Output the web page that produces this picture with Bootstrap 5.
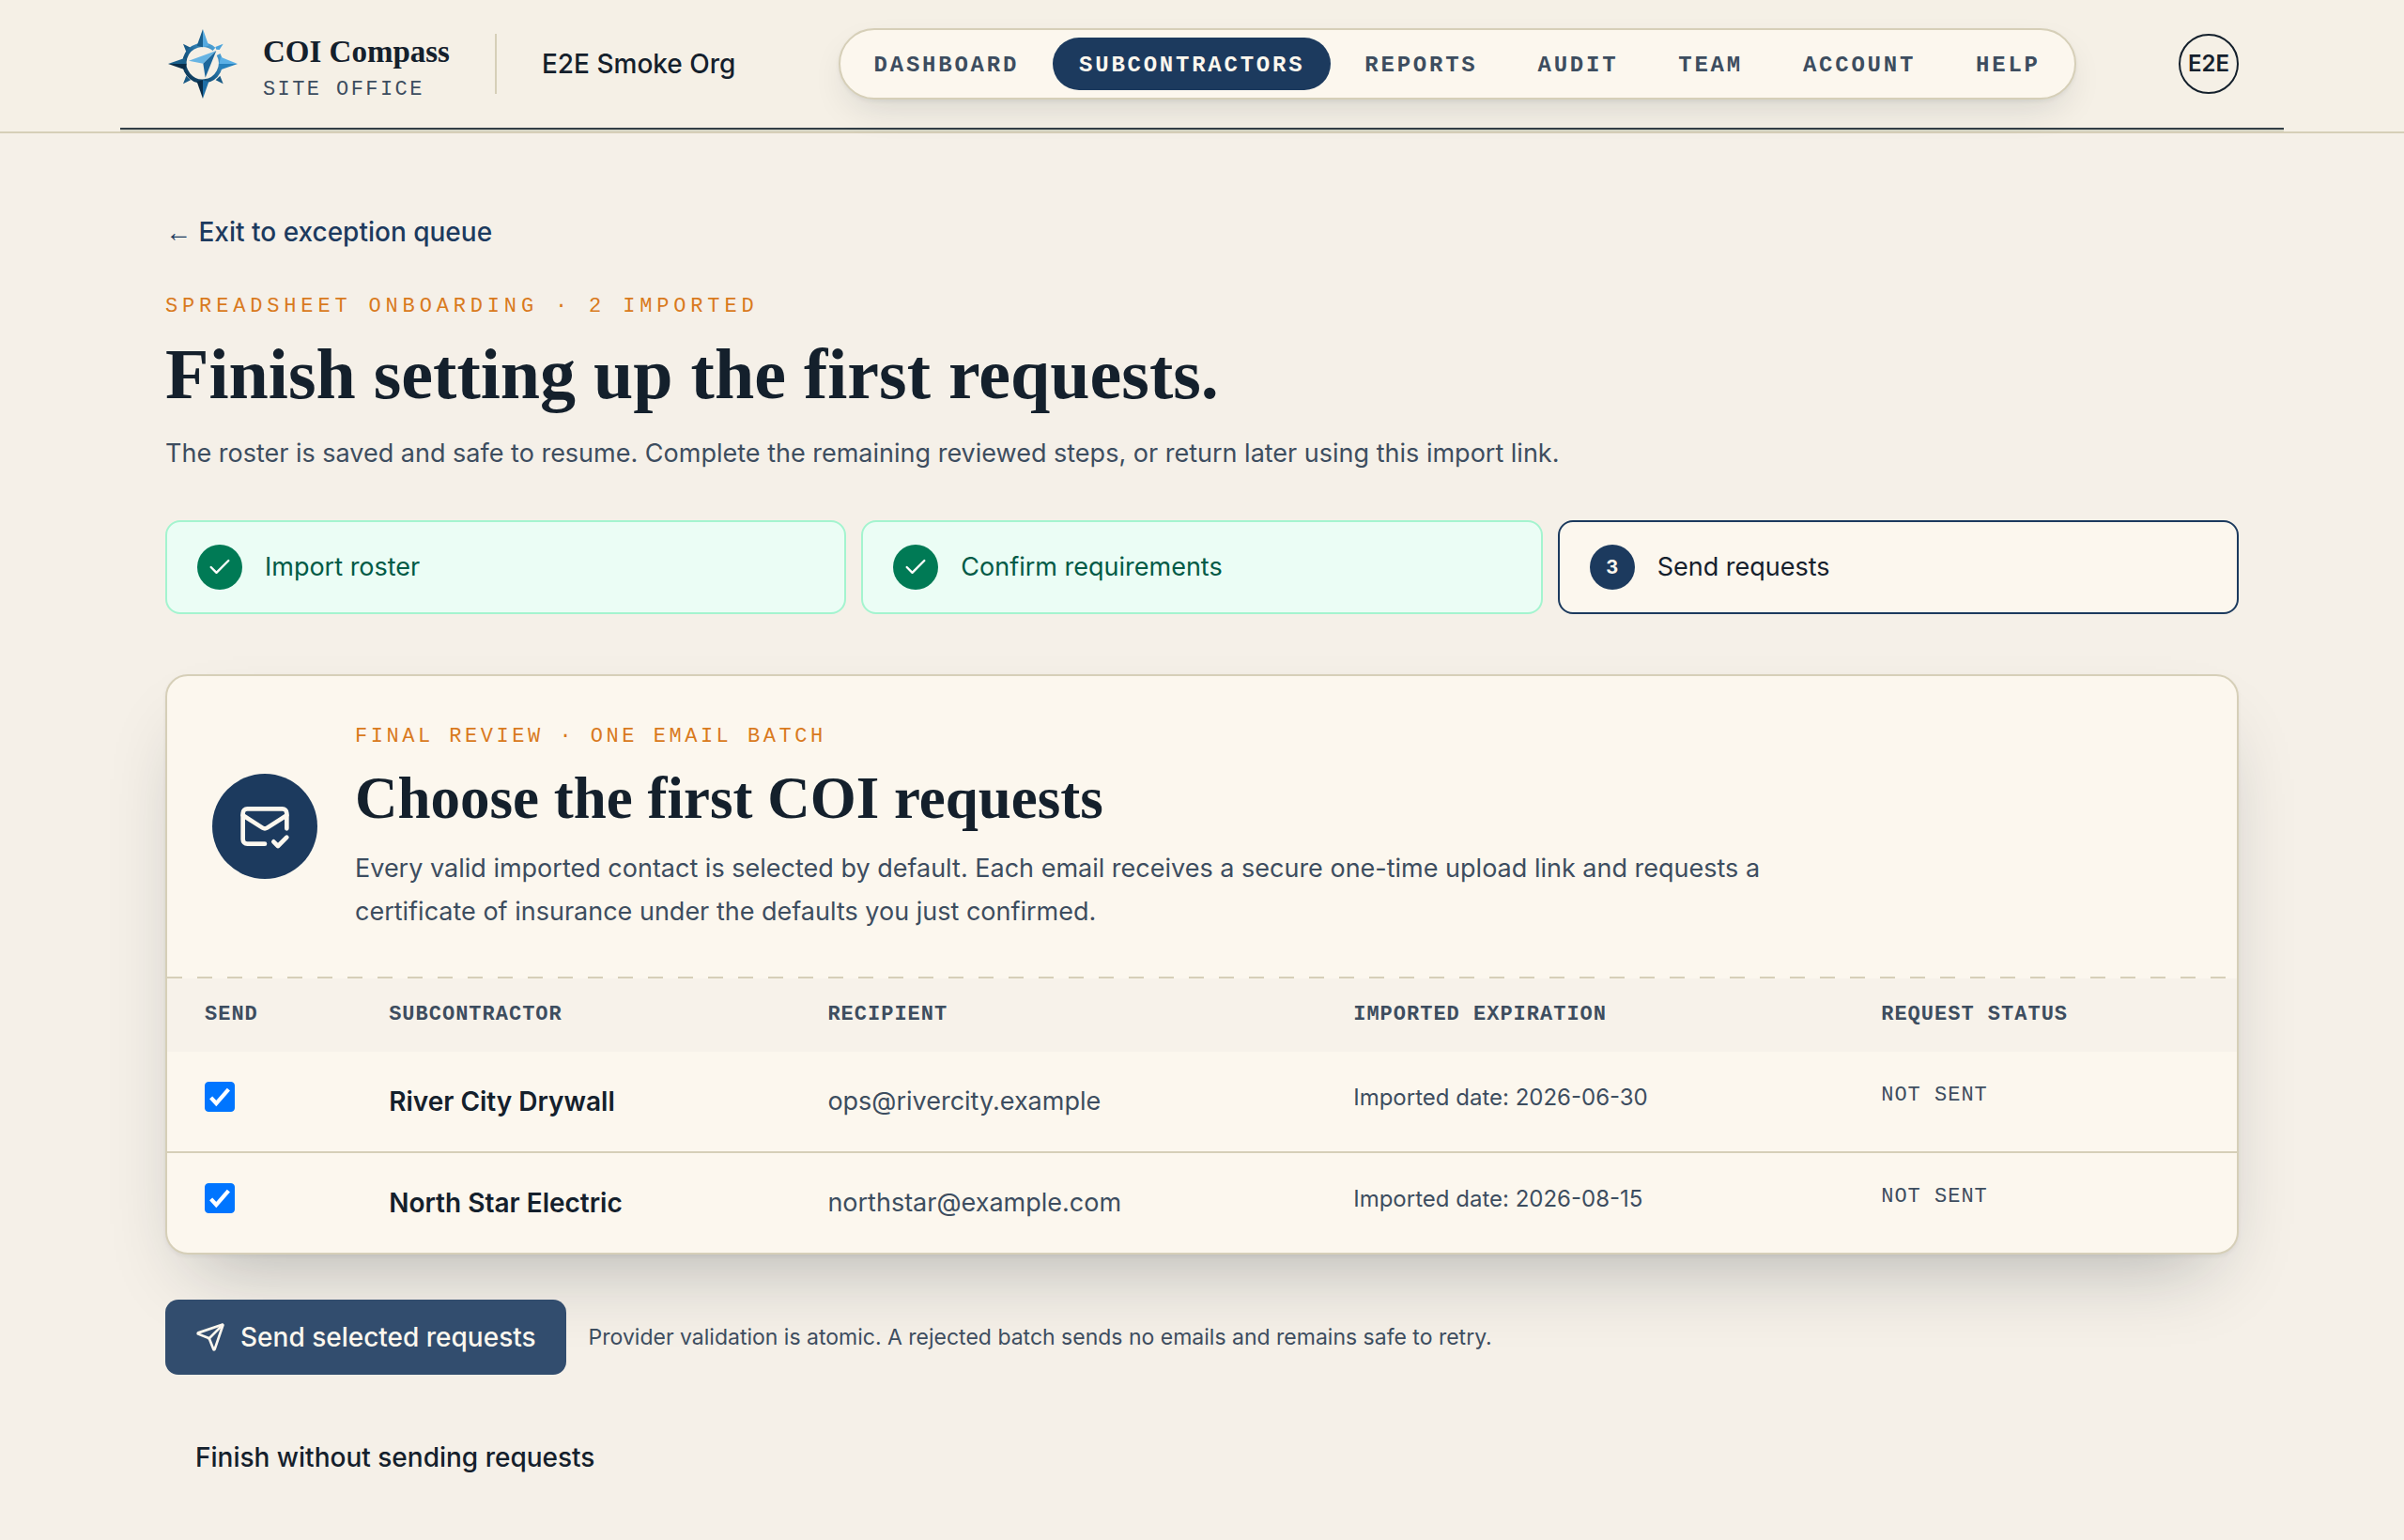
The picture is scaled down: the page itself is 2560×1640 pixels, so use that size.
<!DOCTYPE html>
<html lang="en">
<head>
<meta charset="utf-8">
<meta name="viewport" content="width=device-width, initial-scale=1">
<title>COI Compass – Send requests</title>
<link href="https://cdn.jsdelivr.net/npm/bootstrap@5.3.0/dist/css/bootstrap.min.css" rel="stylesheet">
<style>
  :root {
    --ink: #14202c;
    --slate: #3d4d5f;
    --navy: #1c3a5e;
    --paper: #f5f0e8;
    --cream: #fcf7ee;
    --line: #d6cfb8;
    --amber: #d97a1d;
    --mono: "Liberation Mono", monospace;
    --serif: "Liberation Serif", serif;
  }
  body {
    background: var(--paper);
    color: var(--ink);
    font-family: Inter, sans-serif;
    font-size: 28px;
    line-height: 42px;
  }
  .shell { max-width: 2304px; margin: 0 auto; padding: 0 48px; }

  .site-header { border-bottom: 2px solid var(--line); background: #f5f0e6; }
  .header-bar {
    min-height: 138px;
    margin-bottom: 2px;
    border-bottom: 2px solid #333f47;
    box-shadow: 0 2px 0 #d6d6c6;
  }
  .brand { gap: 24px; color: var(--ink); }
  .brand-text { padding-top: 12px; }
  .brand-name { font: bold 33px/36px var(--serif); }
  .brand-sub { font: 22px/30px var(--mono); letter-spacing: .11em; color: var(--slate); margin-top: 8px; }
  .org { border-left: 2px solid var(--line); margin-left: 48px; padding-left: 48px; line-height: 64px; font-weight: 500; }

  .main-nav {
    gap: 8px;
    padding: 8px;
    background: var(--cream);
    border: 2px solid var(--line);
    border-radius: 38px;
    box-shadow: 0 2px 4px rgba(20,32,44,.06), 0 16px 40px -12px rgba(20,32,44,.16);
  }
  .main-nav .nav-link {
    padding: 4px 28px 0;
    border-radius: 28px;
    font: bold 24px/52px var(--mono);
    letter-spacing: .115em;
    color: var(--slate);
  }
  .main-nav .nav-link.active { background: var(--navy); color: var(--cream); }
  .avatar {
    width: 64px; height: 64px; padding: 0;
    border: 2px solid var(--ink); border-radius: 50%;
    background: transparent; color: var(--ink);
    font-size: 24px; font-weight: 600; line-height: 60px;
  }

  main { padding-top: 84px !important; padding-bottom: 40px !important; }
  .back-link { display: inline-block; height: 42px; color: var(--navy); font-weight: 500; text-decoration: none; }
  .back-arrow { font-family: var(--serif); font-weight: 400; line-height: 1; }
  .eyebrow { font: 22px/30px var(--mono); letter-spacing: .16em; color: var(--amber); margin: 0; }
  .eyebrow.wide { letter-spacing: .22em; margin-top: 44px; }
  h1 { font: bold 76px/76px var(--serif); margin: 18px 0 24px; }
  h2 { font: bold 63px/64px var(--serif); margin: 18px 0 20px; }
  .copy { font-size: 27px; line-height: 46px; color: var(--slate); margin: 0; }

  .steps { gap: 16px; margin: 48px 0 64px; padding: 0; list-style: none; font-size: 27px; }
  .step {
    flex: 1 1 0; gap: 24px; padding: 24px 32px;
    border: 2px solid #a4f4cf; border-radius: 16px;
    background: #ebfdf5; color: #005a46;
  }
  .step.current { border-color: var(--navy); background: var(--cream); color: var(--ink); }
  .dot {
    width: 48px; height: 48px; border-radius: 50%;
    background: #007a55; color: #fff; font-size: 20px; font-weight: 700;
  }
  .step.current .dot { background: var(--navy); color: var(--cream); }

  .review {
    background: var(--cream);
    border: 2px solid var(--line);
    border-radius: 24px;
    overflow: hidden;
    box-shadow: 0 2px 4px rgba(20,32,44,.06), 0 40px 80px -32px rgba(20,32,44,.3);
  }
  .review-head { gap: 40px; padding: 48px; }
  .review-copy { max-width: 1536px; padding-top: 2px; margin-bottom: -2px; }
  .review-icon { width: 112px; height: 112px; border-radius: 50%; background: var(--navy); color: var(--cream); }
  .dashes { height: 2px; background: repeating-linear-gradient(90deg, var(--line) 0 16px, transparent 16px 32px); }

  .requests { --bs-table-bg: transparent; margin: 0; table-layout: fixed; border-color: var(--line); }
  .requests th { padding: 24px 40px; border: 0; background: #f7f2ea; font: bold 22px/30px var(--mono); letter-spacing: 1px; color: var(--slate); white-space: nowrap; }
  .requests td { padding: 32px 40px; border: 0; color: var(--slate); vertical-align: top; font-size: 27px; }
  .requests tbody tr + tr td { border-top: 2px solid var(--line); }
  .requests .sub-name { color: var(--ink); font-size: 28px; font-weight: 600; }
  .requests .expiry { font-size: 24px; line-height: 34px; }
  .requests .state { font: 22px/30px var(--mono); letter-spacing: 1px; }
  .requests .form-check-input {
    display: block; float: none; width: 32px; height: 32px; margin: 0; border-radius: 4px;
  }
  .requests .form-check-input:checked {
    background-color: #0075ff; border-color: #0075ff;
    background-image: url("data:image/svg+xml,%3csvg xmlns='http://www.w3.org/2000/svg' viewBox='0 0 32 32'%3e%3cpath d='M6 17l6 6.500L26 7.500' fill='none' stroke='%23fff' stroke-width='4.500'/%3e%3c/svg%3e");
  }

  .actions { gap: 24px; margin: 48px 0; }
  .btn-send, .btn-skip { height: 80px; padding: 0 32px; border: 0; border-radius: 14px; font-size: 28px; font-weight: 500; }
  .btn-send, .btn-send:hover { gap: 16px; background: #324d6e; color: var(--cream); }
  .btn-skip { color: var(--ink); }
  .hint { font-size: 23px; line-height: 36px; color: var(--slate); }
  .stroke-icon { fill: none; stroke: currentColor; stroke-width: 2; stroke-linecap: round; stroke-linejoin: round; flex: none; }
</style>
</head>
<body>
<header class="site-header">
  <div class="shell header-bar d-flex align-items-center justify-content-between">
    <div class="d-flex align-items-center">
      <a href="#" class="brand d-flex align-items-center text-decoration-none">
        <svg width="80" height="80" viewBox="18 24 240 240" aria-hidden="true">
          <defs>
            <linearGradient id="ringTone" x1="0" y1="1" x2="1" y2="0">
              <stop offset="0" stop-color="#0b2f4a"/><stop offset=".5" stop-color="#1c6596"/><stop offset="1" stop-color="#5db4ea"/>
            </linearGradient>
          </defs>
          <path d="M75 80l24 12-14 14zM75 208l24-12-14-14zM203 208l-24-12 14-14z" fill="#185a86"/>
          <path d="M203 80l-12 19-10-1-3-8z" fill="#4aa3dc"/>
          <path d="M174 97A58 58 0 1 0 188 114" fill="none" stroke="url(#ringTone)" stroke-width="13"/>
          <path d="M138 33l-19 53 19 5z" fill="#195f8d"/><path d="M138 33l19 53-19 5z" fill="#55aae0"/>
          <path d="M27 144l54-19 5 19z" fill="#1b608c"/><path d="M27 144l54 19 5-19z" fill="#0a2c47"/>
          <path d="M249 144l-54-22-5 22z" fill="#5bb0e6"/><path d="M249 144l-54 19-5-19z" fill="#2681bd"/>
          <path d="M138 255l-19-54 19-5z" fill="#0a2c47"/><path d="M138 255l19-54-19-5z" fill="#1e6ea6"/>
          <path d="M181 102L93 134l46 9z" fill="#67b4e3"/><path d="M181 102l-42 41 7 45z" fill="#1d669b"/>
        </svg>
        <span class="brand-text d-flex flex-column">
          <span class="brand-name">COI Compass</span>
          <span class="brand-sub">SITE OFFICE</span>
        </span>
      </a>
      <span class="org">E2E Smoke Org</span>
    </div>
    <nav class="main-nav nav flex-nowrap" aria-label="Main">
      <a class="nav-link" href="#">DASHBOARD</a>
      <a class="nav-link active" aria-current="page" href="#">SUBCONTRACTORS</a>
      <a class="nav-link" href="#">REPORTS</a>
      <a class="nav-link" href="#">AUDIT</a>
      <a class="nav-link" href="#">TEAM</a>
      <a class="nav-link" href="#">ACCOUNT</a>
      <a class="nav-link" href="#">HELP</a>
    </nav>
    <button type="button" class="avatar">E2E</button>
  </div>
</header>

<main class="shell">
  <div class="d-flex"><a href="#" class="back-link"><span class="back-arrow">←</span> Exit to exception queue</a></div>
  <p class="eyebrow wide">SPREADSHEET ONBOARDING · 2 IMPORTED</p>
  <h1>Finish setting up the first requests.</h1>
  <p class="copy">The roster is saved and safe to resume. Complete the remaining reviewed steps, or return later using this import link.</p>

  <ol class="steps d-flex">
    <li class="step d-flex align-items-center">
      <span class="dot d-flex align-items-center justify-content-center"><svg class="stroke-icon" width="28" height="28" viewBox="0 0 24 24"><path d="M20 6 9 17l-5-5"/></svg></span>
      <span>Import roster</span>
    </li>
    <li class="step d-flex align-items-center">
      <span class="dot d-flex align-items-center justify-content-center"><svg class="stroke-icon" width="28" height="28" viewBox="0 0 24 24"><path d="M20 6 9 17l-5-5"/></svg></span>
      <span>Confirm requirements</span>
    </li>
    <li class="step current d-flex align-items-center" aria-current="step">
      <span class="dot d-flex align-items-center justify-content-center">3</span>
      <span>Send requests</span>
    </li>
  </ol>

  <form>
    <section class="review">
      <div class="review-head d-flex align-items-center">
        <span class="review-icon d-flex align-items-center justify-content-center flex-shrink-0">
          <svg class="stroke-icon" width="56" height="56" viewBox="0 0 24 24"><path d="M22 13V6a2 2 0 0 0-2-2H4a2 2 0 0 0-2 2v12c0 1.100.9 2 2 2h8"/><path d="m22 7-8.970 5.700a1.940 1.940 0 0 1-2.060 0L2 7"/><path d="m16 19 2 2 4-4"/></svg>
        </span>
        <div class="review-copy">
          <p class="eyebrow">FINAL REVIEW · ONE EMAIL BATCH</p>
          <h2>Choose the first COI requests</h2>
          <p class="copy">Every valid imported contact is selected by default. Each email receives a secure one-time upload link and requests a certificate of insurance under the defaults you just confirmed.</p>
        </div>
      </div>
      <div class="dashes"></div>
      <table class="table requests">
        <colgroup>
          <col style="width:8.9%"><col style="width:21.2%"><col style="width:25.4%"><col style="width:25.5%"><col style="width:19%">
        </colgroup>
        <thead>
          <tr><th scope="col">SEND</th><th scope="col">SUBCONTRACTOR</th><th scope="col">RECIPIENT</th><th scope="col">IMPORTED EXPIRATION</th><th scope="col">REQUEST STATUS</th></tr>
        </thead>
        <tbody>
          <tr>
            <td><input class="form-check-input" type="checkbox" id="send-river" checked></td>
            <td class="sub-name"><label for="send-river">River City Drywall</label></td>
            <td>ops@rivercity.example</td>
            <td class="expiry">Imported date: 2026-06-30</td>
            <td class="state">NOT SENT</td>
          </tr>
          <tr>
            <td><input class="form-check-input" type="checkbox" id="send-north" checked></td>
            <td class="sub-name"><label for="send-north">North Star Electric</label></td>
            <td>northstar@example.com</td>
            <td class="expiry">Imported date: 2026-08-15</td>
            <td class="state">NOT SENT</td>
          </tr>
        </tbody>
      </table>
    </section>

    <div class="actions d-flex align-items-center">
      <button type="button" class="btn btn-send d-flex align-items-center">
        <svg class="stroke-icon" width="32" height="32" viewBox="0 0 24 24"><path d="M14.536 21.686a.5.5 0 0 0 .937-.024l6.500-19a.496.496 0 0 0-.635-.635l-19 6.500a.5.5 0 0 0-.024.937l7.930 3.180a2 2 0 0 1 1.112 1.110z"/><path d="m21.854 2.147-10.940 10.939"/></svg>
        Send selected requests
      </button>
      <span class="hint">Provider validation is atomic. A rejected batch sends no emails and remains safe to retry.</span>
    </div>
    <button type="button" class="btn btn-skip">Finish without sending requests</button>
  </form>
</main>
<script src="https://cdn.jsdelivr.net/npm/bootstrap@5.3.0/dist/js/bootstrap.bundle.min.js"></script>
</body>
</html>
